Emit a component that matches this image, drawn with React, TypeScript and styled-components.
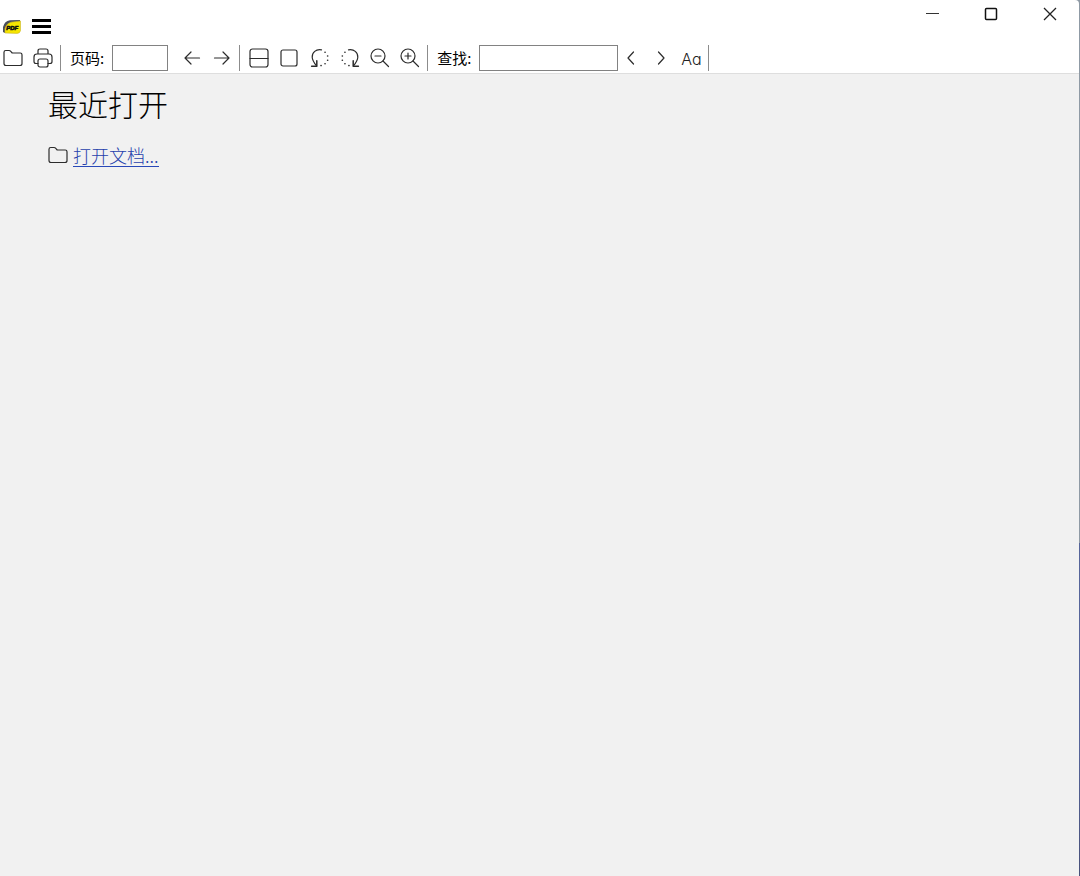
import React from "react";
import styled, { createGlobalStyle } from "styled-components";

const sans = '"Noto Sans CJK SC", "Noto Sans", sans-serif';

const GlobalStyle = createGlobalStyle`
  * { box-sizing: border-box; }
  body { margin: 0; background: #f1f1f1; font-family: ${sans}; color: #000; }
`;

const Window = styled.div`
  display: flex;
  flex-direction: column;
  min-height: 100vh;
  background: linear-gradient(#8f9aa5 0 62%, #56659a 62% 85%, #47507a 100%);
  padding-right: 1px;
`;

const TitleBar = styled.header`
  display: flex;
  justify-content: space-between;
  align-items: flex-start;
  height: 43px;
  background: #fff;
  border-top-right-radius: 4px;
`;

const AppCorner = styled.div`
  display: flex;
  align-items: center;
  gap: 11px;
  padding: 17px 0 0 3px;
`;

const WindowControls = styled.div`
  display: flex;
`;

const PlainButton = styled.button`
  display: flex;
  align-items: center;
  justify-content: center;
  padding: 0;
  border: 0;
  background: none;
  color: #222;
  flex: none;
`;

const ControlButton = styled(PlainButton)`
  width: 59px;
  height: 28px;
`;

const MenuButton = styled(PlainButton)`
  width: 19px;
  height: 20px;
`;

const Toolbar = styled.div`
  display: flex;
  align-items: center;
  height: 31px;
  padding-left: 3px;
  background: #fff;
  border-bottom: 1px solid #dedede;
`;

const ToolGroup = styled.div<{ $before?: number }>`
  display: flex;
  align-items: center;
  gap: 10px;
  margin-left: ${(p) => p.$before ?? 0}px;
`;

const ToolButton = styled(PlainButton)`
  width: 20px;
  height: 26px;
`;

const MatchCaseButton = styled(ToolButton)`
  font: 300 16px/26px Inter, sans-serif;
  font-feature-settings: "cv11";
  padding-top: 2px;
`;

const Separator = styled.span`
  width: 1px;
  height: 26px;
  margin: 0 9px 0 7px;
  background: #8c8c8c;
`;

const Field = styled.label`
  display: flex;
  align-items: center;
  gap: 8px;
  font-size: 15px;
  line-height: 26px;
  white-space: nowrap;
`;

const TextBox = styled.input<{ $width: number }>`
  width: ${(p) => p.$width}px;
  height: 26px;
  padding: 0 4px;
  border: 1px solid #828282;
  border-radius: 0;
  background: #fff;
  font: 15px ${sans};
  outline: none;
`;

const Content = styled.main`
  flex: 1;
  padding: 7px 48px;
  background: #f1f1f1;
`;

const Heading = styled.h1`
  margin: 0;
  font-size: 30px;
  font-weight: 300;
  line-height: 44px;
`;

const OpenRow = styled.div`
  display: flex;
  align-items: flex-start;
  gap: 5px;
  margin-top: 20px;
`;

const OpenLink = styled.a`
  color: #2640ac;
  font-size: 18px;
  font-weight: 300;
  line-height: 21px;
  text-decoration: none;
  border-bottom: 1px solid #2848b8;
`;

const Icon = ({ children }: { children: React.ReactNode }) => (
  <svg width="20" height="20" viewBox="0 0 20 20" fill="none" stroke="#2c2c2c" strokeWidth="1.2" strokeLinecap="round" strokeLinejoin="round" aria-hidden="true">
    {children}
  </svg>
);

const Folder = () => (
  <Icon>
    <path d="M1 15.5V4.3Q1 2.5 2.8 2.5H6Q7.1 2.5 7.8 3.4L9.2 5H17.2Q19 5 19 6.8V15.5Q19 17.5 17 17.5H3Q1 17.5 1 15.5Z" />
  </Icon>
);

const Printer = () => (
  <Icon>
    <path d="M5 6V3Q5 1 7 1H13Q15 1 15 3V6M5 15.5H3Q1 15.5 1 13.5V9Q1 6 4 6H16Q19 6 19 9V13.5Q19 15.5 17 15.5H15" />
    <rect x="5" y="11" width="10" height="8" rx="2" />
  </Icon>
);

const RotateShape = () => (
  <>
    <path d="M11.5 1.9C6 .8 2 4.6 2.2 9.2C2.4 12.6 4.2 15 6.6 18" />
    <path d="M6.8 12.8V18.2H1.6" strokeWidth="1.5" />
    <path d="M15 4.2h.1M17.6 8h.1M17.6 12.2h.1M15 15.8h.1M11 17.6h.1" strokeWidth="1.6" />
  </>
);

export default function App() {
  return (
    <>
      <GlobalStyle />
      <Window>
        <TitleBar>
          <AppCorner>
            <svg width="18" height="16" viewBox="0 0 18 16" role="img" aria-label="PDF">
              <path d="M0 13V8Q1.5 2 7 1.2L17 1V4L6 5L2 14Z" fill="#4a4f5c" />
              <path d="M2 14V9.5Q3.5 4.4 8 3.2L17.5 2V11.5Q17 14.4 14 14.4Z" fill="#f7e600" stroke="#c9b52a" strokeWidth=".6" />
              <text x="3.2" y="11.4" fontFamily="Liberation Sans, sans-serif" fontSize="6" fontWeight="700" fontStyle="italic" fill="#111" stroke="#111" strokeWidth=".6">PDF</text>
            </svg>
            <MenuButton aria-label="菜单">
              <svg width="19" height="16" viewBox="0 0 19 16" aria-hidden="true">
                <path d="M0 0H19V3H0ZM0 6H19V9H0ZM0 12H19V15H0Z" fill="#000" />
              </svg>
            </MenuButton>
          </AppCorner>
          <WindowControls>
            <ControlButton aria-label="最小化">
              <svg width="14" height="14" viewBox="0 0 14 14" stroke="#333" aria-hidden="true"><path d="M1 6.5H14" /></svg>
            </ControlButton>
            <ControlButton aria-label="最大化">
              <svg width="14" height="14" viewBox="0 0 14 14" fill="none" stroke="#111" strokeWidth="1.5" aria-hidden="true"><rect x="1.5" y="1.5" width="11" height="11" rx="1" /></svg>
            </ControlButton>
            <ControlButton aria-label="关闭">
              <svg width="14" height="14" viewBox="0 0 14 14" stroke="#222" strokeWidth="1.3" aria-hidden="true"><path d="M1 1L13 13M13 1L1 13" /></svg>
            </ControlButton>
          </WindowControls>
        </TitleBar>

        <Toolbar role="toolbar">
          <ToolGroup>
            <ToolButton aria-label="打开"><Folder /></ToolButton>
            <ToolButton aria-label="打印"><Printer /></ToolButton>
          </ToolGroup>
          <Separator />
          <Field>页码:<TextBox $width={56} /></Field>
          <ToolGroup $before={14}>
            <ToolButton aria-label="上一页"><Icon><path d="M17.5 10H3M9 4L3 10L9 16" /></Icon></ToolButton>
            <ToolButton aria-label="下一页"><Icon><path d="M2.5 10H17M11 4L17 10L11 16" /></Icon></ToolButton>
          </ToolGroup>
          <Separator />
          <ToolGroup>
            <ToolButton aria-label="连续页面"><Icon><rect x="1" y="1" width="18" height="18" rx="2.5" /><path d="M1 10.5H19" /></Icon></ToolButton>
            <ToolButton aria-label="单页"><Icon><rect x="2" y="2" width="16" height="16" rx="2" /></Icon></ToolButton>
          </ToolGroup>
          <ToolGroup $before={11}>
            <ToolButton aria-label="向左旋转"><Icon><RotateShape /></Icon></ToolButton>
            <ToolButton aria-label="向右旋转"><Icon><g transform="matrix(-1 0 0 1 20 0)"><RotateShape /></g></Icon></ToolButton>
            <ToolButton aria-label="缩小"><Icon><circle cx="8" cy="8" r="7" /><path d="M13 13L18.5 18.5M5 8H11" /></Icon></ToolButton>
            <ToolButton aria-label="放大"><Icon><circle cx="8" cy="8" r="7" /><path d="M13 13L18.5 18.5M5 8H11M8 5V11" /></Icon></ToolButton>
          </ToolGroup>
          <Separator />
          <Field>查找:<TextBox $width={139} /></Field>
          <ToolGroup $before={3}>
            <ToolButton aria-label="查找上一个"><Icon><path d="M12.5 4L7 10L12.5 16" /></Icon></ToolButton>
            <ToolButton aria-label="查找下一个"><Icon><path d="M7.5 4L13 10L7.5 16" /></Icon></ToolButton>
            <MatchCaseButton title="区分大小写">Aa</MatchCaseButton>
          </ToolGroup>
          <Separator />
        </Toolbar>

        <Content>
          <Heading>最近打开</Heading>
          <OpenRow>
            <Folder />
            <OpenLink href="#open">打开文档...</OpenLink>
          </OpenRow>
        </Content>
      </Window>
    </>
  );
}
